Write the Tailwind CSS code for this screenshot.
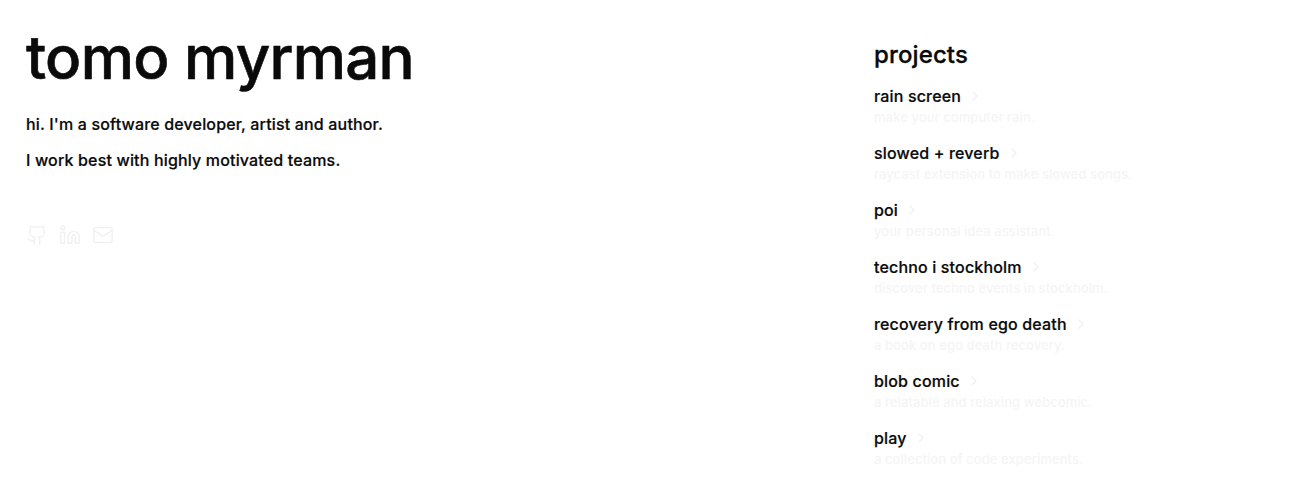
<!DOCTYPE html>
<html>
<head>
<meta charset="utf-8">
<script src="https://cdn.jsdelivr.net/npm/@tailwindcss/browser@4"></script>
</head>
<body class="bg-white font-['Inter',sans-serif] text-[#0a0a0a]">
<main class="flex h-[496px] overflow-hidden pl-[26px]">
  <section class="w-[848px] shrink-0">
    <h1 class="mt-[21px] text-[60px] leading-[72px] font-medium tracking-[-0.012em] [-webkit-text-stroke:0.6px_#0a0a0a]">tomo myrman</h1>
    <p class="mt-[17px] text-[16px] leading-[28px] font-medium tracking-[0.01em] [-webkit-text-stroke:0.2px_#0a0a0a]">hi. I'm a software developer, artist and author.</p>
    <p class="mt-[8px] text-[16px] leading-[28px] font-medium tracking-[0.01em] [-webkit-text-stroke:0.2px_#0a0a0a]">I work best with highly motivated teams.</p>
    <div class="mt-[50px] flex gap-[11px] text-[#f0f0f0]">
      <svg class="size-[22px]" viewBox="0 0 24 24" fill="none" stroke="currentColor" stroke-width="1.5" stroke-linecap="round" stroke-linejoin="round"><path d="M15 22v-4a4.8 4.8 0 0 0-1-3.5c3 0 6-2 6-5.5.08-1.25-.27-2.48-1-3.5.28-1.15.28-2.35 0-3.5 0 0-1 0-3 1.5-2.64-.5-5.36-.5-8 0C6 2 5 2 5 2c-.3 1.15-.3 2.35 0 3.5A5.403 5.403 0 0 0 4 9c0 3.5 3 5.5 6 5.5-.39.49-.68 1.05-.85 1.65-.17.6-.22 1.23-.15 1.85v4"/><path d="M9 18c-4.51 2-5-2-7-2"/></svg>
      <svg class="size-[22px]" viewBox="0 0 24 24" fill="none" stroke="currentColor" stroke-width="1.5" stroke-linecap="round" stroke-linejoin="round"><path d="M16 8a6 6 0 0 1 6 6v7h-4v-7a2 2 0 0 0-2-2 2 2 0 0 0-2 2v7h-4v-7a6 6 0 0 1 6-6z"/><rect width="4" height="12" x="2" y="9"/><circle cx="4" cy="4" r="2"/></svg>
      <svg class="size-[22px]" viewBox="0 0 24 24" fill="none" stroke="currentColor" stroke-width="1.5" stroke-linecap="round" stroke-linejoin="round"><rect width="20" height="16" x="2" y="4" rx="2"/><path d="m22 7-8.97 5.7a1.94 1.94 0 0 1-2.06 0L2 7"/></svg>
    </div>
  </section>
  <section class="flex-1 pt-[39px]">
    <h2 class="text-[24px] leading-[32px] font-medium tracking-[0.005em] [-webkit-text-stroke:0.3px_#0a0a0a]">projects</h2>
    <ul class="mt-[10px] flex flex-col gap-[1px]">
      <li class="h-[56px] pt-[1px]"><div class="flex h-[27px] items-center gap-[6px] text-[16px] font-medium tracking-[0.01em] [-webkit-text-stroke:0.2px_#0a0a0a]">rain screen<svg class="size-4 text-[#f0f0f0]" viewBox="0 0 24 24" fill="none" stroke="currentColor" stroke-width="2" stroke-linecap="round" stroke-linejoin="round"><path d="m9 18 6-6-6-6"/></svg></div><p class="text-[13px] leading-[16px] font-medium tracking-[0.006em] text-[#f5f5f5]">make your computer rain.</p></li>
      <li class="h-[56px] pt-[1px]"><div class="flex h-[27px] items-center gap-[6px] text-[16px] font-medium tracking-[0.01em] [-webkit-text-stroke:0.2px_#0a0a0a]">slowed + reverb<svg class="size-4 text-[#f0f0f0]" viewBox="0 0 24 24" fill="none" stroke="currentColor" stroke-width="2" stroke-linecap="round" stroke-linejoin="round"><path d="m9 18 6-6-6-6"/></svg></div><p class="text-[13px] leading-[16px] font-medium tracking-[0.006em] text-[#f5f5f5]">raycast extension to make slowed songs.</p></li>
      <li class="h-[56px] pt-[1px]"><div class="flex h-[27px] items-center gap-[6px] text-[16px] font-medium tracking-[0.01em] [-webkit-text-stroke:0.2px_#0a0a0a]">poi<svg class="size-4 text-[#f0f0f0]" viewBox="0 0 24 24" fill="none" stroke="currentColor" stroke-width="2" stroke-linecap="round" stroke-linejoin="round"><path d="m9 18 6-6-6-6"/></svg></div><p class="text-[13px] leading-[16px] font-medium tracking-[0.006em] text-[#f5f5f5]">your personal idea assistant.</p></li>
      <li class="h-[56px] pt-[1px]"><div class="flex h-[27px] items-center gap-[6px] text-[16px] font-medium tracking-[0.01em] [-webkit-text-stroke:0.2px_#0a0a0a]">techno i stockholm<svg class="size-4 text-[#f0f0f0]" viewBox="0 0 24 24" fill="none" stroke="currentColor" stroke-width="2" stroke-linecap="round" stroke-linejoin="round"><path d="m9 18 6-6-6-6"/></svg></div><p class="text-[13px] leading-[16px] font-medium tracking-[0.006em] text-[#f5f5f5]">discover techno events in stockholm.</p></li>
      <li class="h-[56px] pt-[1px]"><div class="flex h-[27px] items-center gap-[6px] text-[16px] font-medium tracking-[0.01em] [-webkit-text-stroke:0.2px_#0a0a0a]">recovery from ego death<svg class="size-4 text-[#f0f0f0]" viewBox="0 0 24 24" fill="none" stroke="currentColor" stroke-width="2" stroke-linecap="round" stroke-linejoin="round"><path d="m9 18 6-6-6-6"/></svg></div><p class="text-[13px] leading-[16px] font-medium tracking-[0.006em] text-[#f5f5f5]">a book on ego death recovery.</p></li>
      <li class="h-[56px] pt-[1px]"><div class="flex h-[27px] items-center gap-[6px] text-[16px] font-medium tracking-[0.01em] [-webkit-text-stroke:0.2px_#0a0a0a]">blob comic<svg class="size-4 text-[#f0f0f0]" viewBox="0 0 24 24" fill="none" stroke="currentColor" stroke-width="2" stroke-linecap="round" stroke-linejoin="round"><path d="m9 18 6-6-6-6"/></svg></div><p class="text-[13px] leading-[16px] font-medium tracking-[0.006em] text-[#f5f5f5]">a relatable and relaxing webcomic.</p></li>
      <li class="h-[56px] pt-[1px]"><div class="flex h-[27px] items-center gap-[6px] text-[16px] font-medium tracking-[0.01em] [-webkit-text-stroke:0.2px_#0a0a0a]">play<svg class="size-4 text-[#f0f0f0]" viewBox="0 0 24 24" fill="none" stroke="currentColor" stroke-width="2" stroke-linecap="round" stroke-linejoin="round"><path d="m9 18 6-6-6-6"/></svg></div><p class="text-[13px] leading-[16px] font-medium tracking-[0.006em] text-[#f5f5f5]">a collection of code experiments.</p></li>
    </ul>
  </section>
</main>
</body>
</html>
